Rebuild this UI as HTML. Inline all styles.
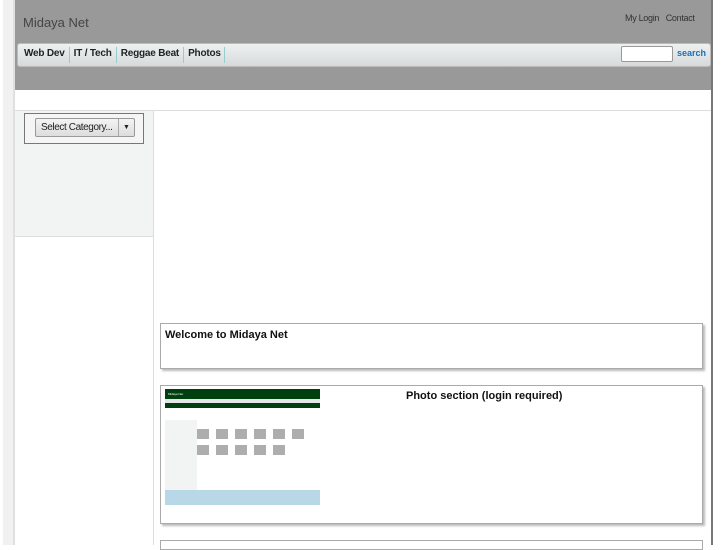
<!DOCTYPE html>
<html><head><meta charset="utf-8"><style>
*{margin:0;padding:0;box-sizing:border-box}
body{width:727px;height:545px;overflow:hidden;background:#fff;font-family:"Liberation Sans",sans-serif;position:relative}
.abs{position:absolute}
</style></head><body>
<div class="abs" style="left:3px;top:0;width:11px;height:545px;background:#f1f1f1"></div>
<div class="abs" style="left:13px;top:0;width:2px;height:545px;background:#e0e0e0"></div>
<div class="abs" style="left:711px;top:0;width:2px;height:545px;background:#777"></div>
<div class="abs" style="left:15px;top:0;width:696px;height:90px;background:#999"></div>
<div class="abs" style="left:23px;top:15px;font-size:13px;color:#444">Midaya Net</div>
<div class="abs" style="left:625px;top:13px;font-size:9px;color:#333;letter-spacing:-0.3px">My Login&nbsp;&nbsp; Contact</div>
<div class="abs" style="left:17px;top:43px;width:694px;height:24px;background:linear-gradient(#eef1f2,#d6dadc);border-radius:3px;border:1px solid #bbb"></div>
<div class="abs" style="left:24px;top:47px;font-size:10px;font-weight:bold;color:#222;display:flex;height:16px;line-height:13px;letter-spacing:-0.2px">
<span style="padding-right:4px;border-right:1px solid #9cc">Web Dev</span>
<span style="padding:0 4px;border-right:1px solid #9cc">IT / Tech</span>
<span style="padding:0 4px;border-right:1px solid #9cc">Reggae Beat</span>
<span style="padding:0 4px;border-right:1px solid #9cc;width:41px">Photos</span></div>
<div class="abs" style="left:621px;top:46px;width:52px;height:16px;background:#fff;border:1px solid #999;border-radius:2px"></div>
<div class="abs" style="left:677px;top:48px;font-size:9px;font-weight:bold;color:#1a6fb5">search</div>
<div class="abs" style="left:15px;top:110px;width:696px;height:1px;background:#ddd"></div>
<div class="abs" style="left:15px;top:111px;width:138px;height:126px;background:#f2f4f3;border-bottom:1px solid #ddd"></div>
<div class="abs" style="left:153px;top:111px;width:1px;height:434px;background:#ddd"></div>
<div class="abs" style="left:24px;top:113px;width:120px;height:31px;border:1px solid #777;background:#f5f5f5"></div>
<div class="abs" style="left:35px;top:118px;width:100px;height:19px;border:1px solid #999;border-radius:2px;background:linear-gradient(#f4f4f4,#ddd);font-size:10px;line-height:17px;color:#222;padding-left:5px;letter-spacing:-0.4px">Select Category...
<span style="position:absolute;right:0;top:0;width:16px;height:17px;border-left:1px solid #aaa;text-align:center;font-size:7px;letter-spacing:0">▼</span></div>
<div class="abs" style="left:160px;top:323px;width:543px;height:46px;border:1px solid #aaa;box-shadow:2px 2px 2px #bbb;background:#fff"></div>
<div class="abs" style="left:165px;top:329px;font-size:11px;font-weight:bold;color:#111">Welcome to Midaya Net</div>
<div class="abs" style="left:160px;top:385px;width:543px;height:139px;border:1px solid #aaa;box-shadow:2px 2px 2px #bbb;background:#fff"></div>
<div class="abs" style="left:406px;top:390px;font-size:11px;font-weight:bold;color:#111">Photo section (login required)</div>
<div class="abs" style="left:165px;top:389px;width:155px;height:116px;background:#fff">
<div style="height:10px;background:#003f0e;color:#fff;font-size:3px;padding:3px">Midaya Net</div>
<div style="height:4px;background:#e5e8e8"></div>
<div style="height:5px;background:#003f0e"></div>
<div style="position:absolute;left:0;top:31px;width:32px;height:70px;background:#f2f4f3"></div>
<div style="position:absolute;left:32px;top:40px;width:110px;height:10px;background:repeating-linear-gradient(90deg,#777 0 12px,transparent 12px 19px);opacity:.6"></div>
<div style="position:absolute;left:32px;top:56px;width:90px;height:10px;background:repeating-linear-gradient(90deg,#777 0 12px,transparent 12px 19px);opacity:.6"></div>
<div style="position:absolute;left:0;top:101px;width:155px;height:15px;background:#b8d8e8"></div>
</div>
<div class="abs" style="left:160px;top:540px;width:543px;height:10px;border:1px solid #aaa"></div>
</body></html>
